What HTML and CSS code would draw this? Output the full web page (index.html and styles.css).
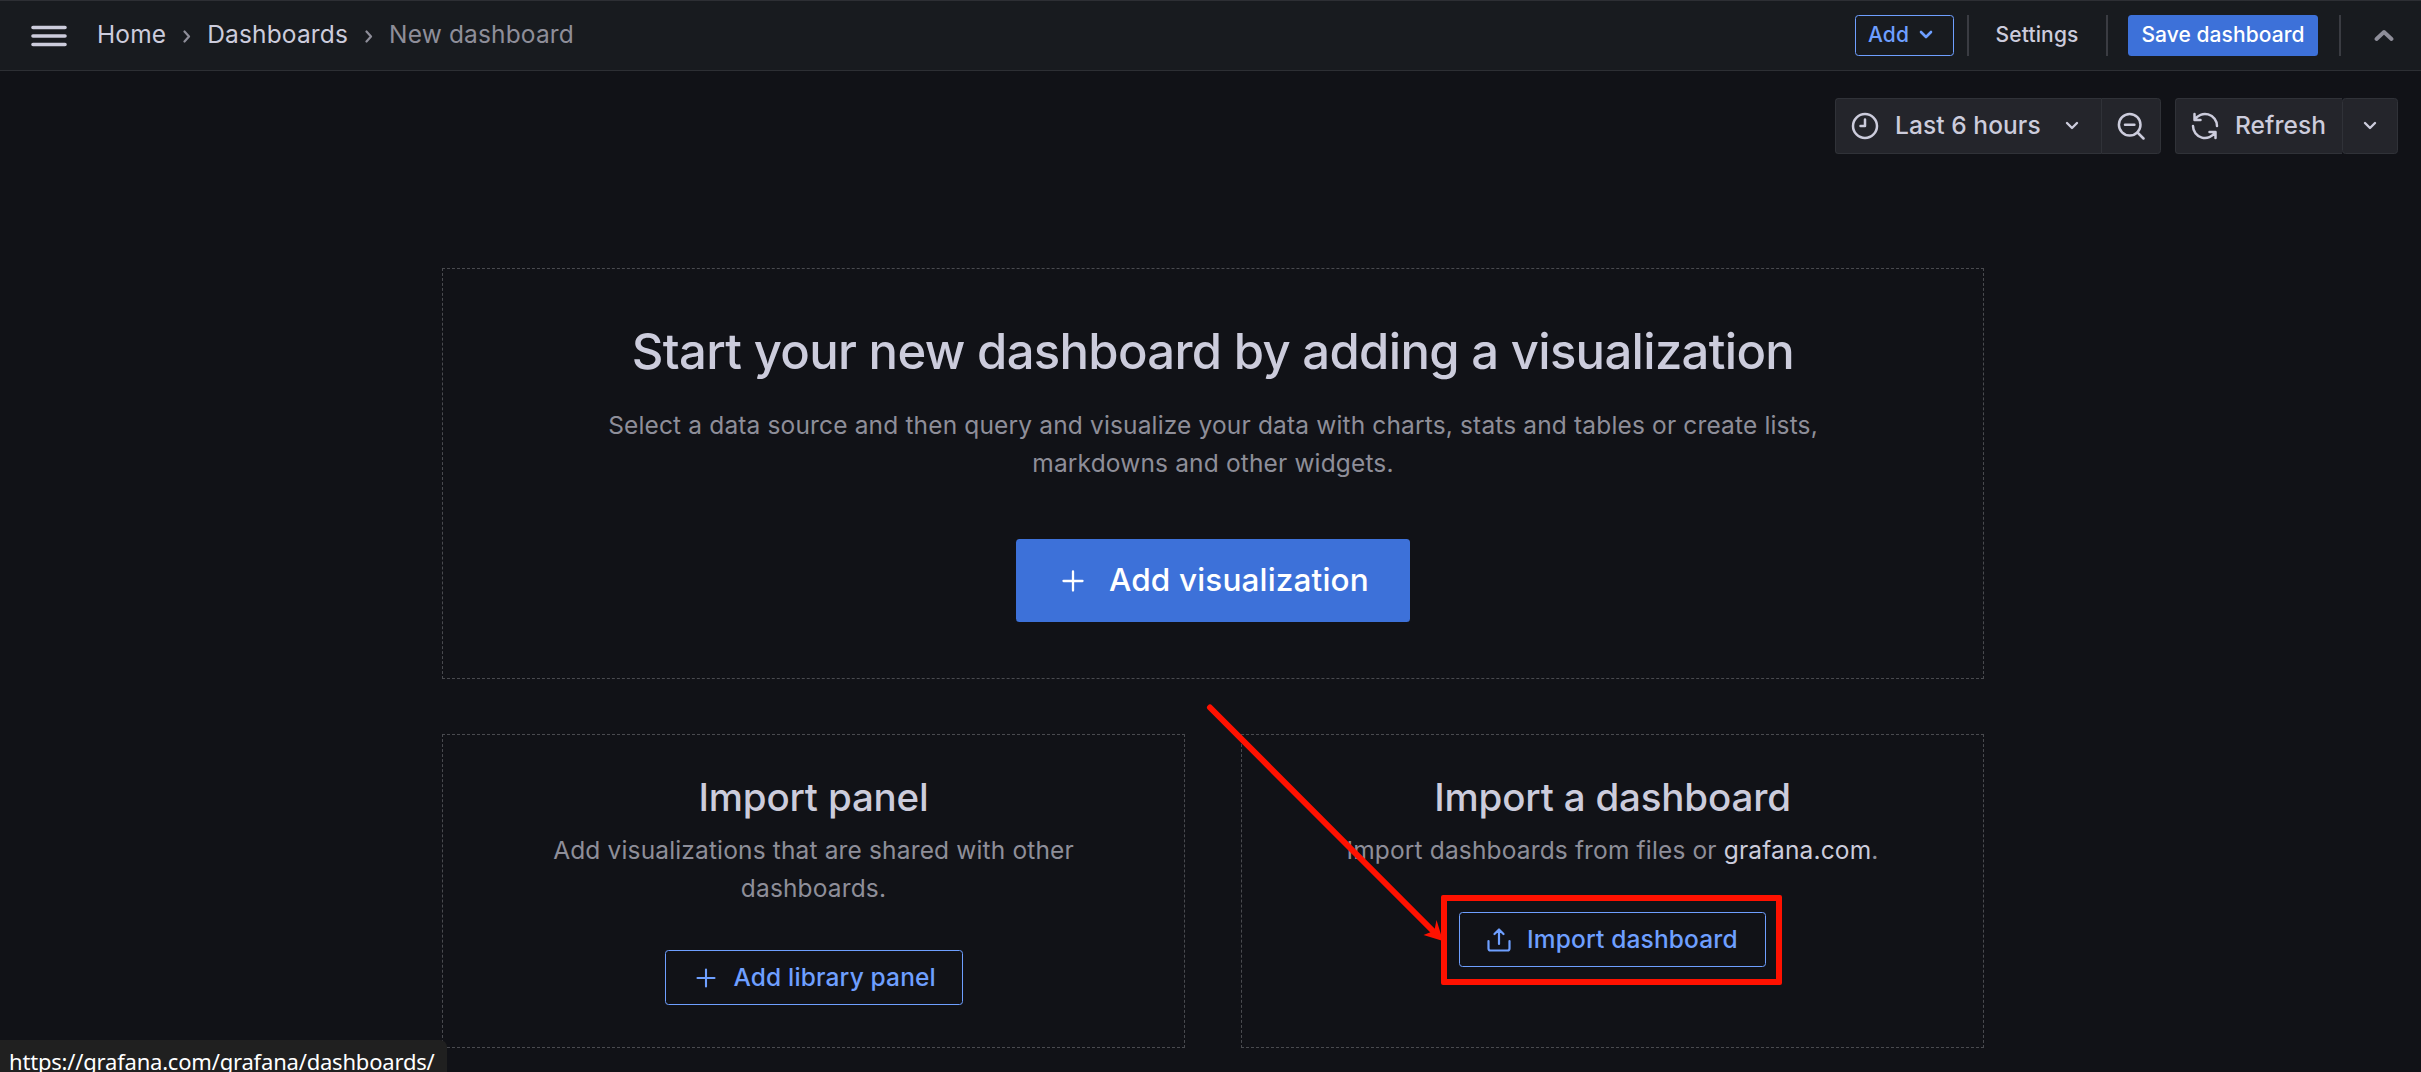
FILE: index.html
```html
<!DOCTYPE html>
<html lang="en">
<head>
<meta charset="utf-8">
<title>New dashboard - Dashboards - Grafana</title>
<link rel="stylesheet" href="styles.css">
</head>
<body>
<header class="topbar">
  <button class="menu" aria-label="Menu">
    <svg width="36" height="24" viewBox="0 0 36 24"><path d="M2 3.5h32M2 12h32M2 20.500h32" stroke-width="3.6"/></svg>
  </button>
  <nav class="crumbs">
    <a class="crumb">Home</a>
    <svg class="sep" width="8" height="13" viewBox="0 0 8 13"><path d="M1.500 1.500l4.500 5-4.500 5" stroke-width="2.200"/></svg>
    <a class="crumb">Dashboards</a>
    <svg class="sep" width="8" height="13" viewBox="0 0 8 13"><path d="M1.500 1.500l4.500 5-4.500 5" stroke-width="2.200"/></svg>
    <span class="crumb current">New dashboard</span>
  </nav>
  <div class="actions">
    <button class="btn small outline add">Add
      <svg width="14" height="10" viewBox="0 0 14 10"><path d="M2 2l5 5 5-5" stroke-width="2.600"/></svg>
    </button>
    <i class="divider d1"></i>
    <button class="btn small text">Settings</button>
    <i class="divider d2"></i>
    <button class="btn small primary save">Save dashboard</button>
    <i class="divider d3"></i>
    <button class="collapse" aria-label="Collapse">
      <svg width="20" height="13" viewBox="0 0 20 13"><path d="M2.500 10L10 3l7.500 7" stroke-width="3.800"/></svg>
    </button>
  </div>
</header>

<div class="toolbar">
  <div class="group">
    <button class="tool range">
      <svg width="28" height="28" viewBox="0 0 28 28"><circle cx="14" cy="14" r="12" stroke-width="2.500"/><path d="M14 7.500V14H9.500" stroke-width="2.500"/></svg>
      <span>Last 6 hours</span>
      <svg class="chev" width="14" height="10" viewBox="0 0 14 10"><path d="M2 2l5 5 5-5" stroke-width="2.400"/></svg>
    </button>
    <button class="tool zoomout" aria-label="Zoom out">
      <svg width="28" height="28" viewBox="0 0 28 28"><circle cx="12.700" cy="12.700" r="10.800" stroke-width="2.500"/><path d="M8 12.700h9.400M20.500 20.500l6 6" stroke-width="2.500"/></svg>
    </button>
  </div>
  <div class="group">
    <button class="tool refresh">
      <svg width="28" height="28" viewBox="0 0 28 28"><path d="M3.500 2v6h6M3.700 7.800A12 12 0 0 1 26 14M24.500 26v-6h-6M24.300 20.200A12 12 0 0 1 2 14" stroke-width="2.500"/></svg>
      <span>Refresh</span>
    </button>
    <button class="tool interval" aria-label="Refresh interval">
      <svg class="chev" width="14" height="10" viewBox="0 0 14 10"><path d="M2 2l5 5 5-5" stroke-width="2.400"/></svg>
    </button>
  </div>
</div>

<main class="empty">
  <section class="card hero">
    <h1>Start your new dashboard by adding a visualization</h1>
    <p>Select a data source and then query and visualize your data with charts, stats and tables or create lists, markdowns and other widgets.</p>
    <button class="btn large primary">
      <svg width="22" height="22" viewBox="0 0 22 22"><path d="M11 1.500v19M1.500 11h19" stroke-width="2.300"/></svg>
      <span>Add visualization</span>
    </button>
  </section>
  <section class="card">
    <h3>Import panel</h3>
    <p>Add visualizations that are shared with other dashboards.</p>
    <button class="btn medium outline library">
      <svg width="20" height="20" viewBox="0 0 20 20"><path d="M10 1.500v17M1.500 10h17" stroke-width="2.100"/></svg>
      <span>Add library panel</span>
    </button>
  </section>
  <section class="card">
    <h3>Import a dashboard</h3>
    <p>Import dashboards from files or <a>grafana.com</a>.</p>
    <button class="btn medium outline import">
      <svg width="24" height="24" viewBox="0 0 24 24"><path d="M12 16V2M7.500 6L12 1.500 16.500 6M1.500 13v7.500a2 2 0 0 0 2 2h17a2 2 0 0 0 2-2V13" stroke-width="2.200"/></svg>
      <span>Import dashboard</span>
    </button>
  </section>
</main>

<div class="highlight"></div>
<svg class="arrow" width="250" height="250" viewBox="0 0 250 250"><path class="shaft" d="M10 7.500L234 232"/><path class="head" d="M243 241l-6.500-21-2 10-1 1-10 4z"/></svg>
<div class="status">https://grafana.com/grafana/dashboards/</div>
</body>
</html>
```
FILE: styles.css
```css
* { box-sizing: border-box; }
html, body { height: 100%; }
body {
  margin: 0;
  overflow: hidden;
  background: #111217;
  color: #ccccdc;
  font: 400 24.5px/38px Inter, "Liberation Sans", sans-serif;
  letter-spacing: 0.15px;
}
svg { display: block; flex: none; fill: none; stroke: currentColor; stroke-linecap: round; stroke-linejoin: round; }
button { margin: 0; padding: 0; border: 0; background: none; color: inherit; font: inherit; letter-spacing: inherit; }
h1, h3, p { margin: 0; }

.topbar {
  display: flex;
  align-items: center;
  height: 71px;
  padding: 0 27px 0 31px;
  background: #181b1f;
  border-top: 1px solid #2d2f34;
  border-bottom: 1px solid #2d2f34;
}
.menu { margin-right: 30px; }
.crumbs { display: flex; align-items: center; }
.crumb { line-height: 36px; padding-bottom: 3px; }
.sep { margin: 2px 16px 0 17px; color: #8e8e99; }
.current { color: #8e8e99; }
.actions { display: flex; align-items: center; margin-left: auto; }

.btn {
  display: inline-flex;
  align-items: center;
  justify-content: center;
  border-radius: 3.5px;
  font-weight: 500;
  white-space: nowrap;
}
.btn span { padding-bottom: 2px; }
.small { height: 41px; padding-bottom: 2px; font-size: 21px; line-height: 38px; }
.medium { height: 55px; justify-content: flex-start; }
.large { height: 83px; width: 394px; padding-left: 46px; justify-content: flex-start; font-size: 31.5px; gap: 25px; }
.outline { border: 1px solid #6e9fff; color: #6e9fff; }
.primary { background: #3d71d9; color: #fff; }
.text { width: 82px; color: #ccccdc; }
.library { width: 298px; padding-left: 30px; gap: 18px; }
.import { width: 307px; padding-left: 27px; gap: 16px; }
.add { width: 99px; gap: 10px; padding-right: 8px; }
.save { width: 190px; letter-spacing: 0.08px; }
.divider { width: 2px; height: 41px; background: #3a3c42; }
.d1 { margin: 0 27px 0 13px; }
.d2 { margin: 0 20px 0 28px; }
.d3 { margin: 0 33px 0 21px; }
.collapse { color: #8e8e99; }

.toolbar { display: flex; justify-content: flex-end; gap: 14px; padding: 27px 23px 0 0; }
.group { display: flex; }
.tool {
  display: flex;
  align-items: center;
  height: 56px;
  background: #24252b;
  border: 1px solid #303238;
  font-weight: 500;
  letter-spacing: 0.08px;
}
.tool span { padding-bottom: 2px; }
.tool svg { margin-bottom: 1px; }
.range { width: 266px; padding-left: 15px; gap: 16px; border-right: 0; border-radius: 3.5px 0 0 3.5px; }
.range .chev { margin-left: 8px; }
.zoomout { width: 60px; padding-right: 1px; justify-content: center; border-radius: 0 3.5px 3.5px 0; }
.refresh { width: 167px; padding-left: 15px; gap: 16px; border-right: 0; border-radius: 3.5px 0 0 3.5px; }
.interval { width: 56px; justify-content: center; border-radius: 3.5px; }

.empty {
  display: grid;
  grid-template-columns: 1fr 1fr;
  grid-template-rows: 411px 314px;
  gap: 55px 56px;
  width: 1542px;
  margin: 114px 0 0 442px;
}
.card {
  display: flex;
  flex-direction: column;
  align-items: center;
  padding: 41px 55px 0;
  border: 1px dashed #494a4f;
  text-align: center;
}
.card p { color: #8e8e99; }
.card a { color: #ccccdc; }
.hero { grid-column: 1 / 3; padding: 49px 140px 0; }
h1 { font-size: 49px; line-height: 68px; font-weight: 500; letter-spacing: -0.68px; margin-bottom: 20px; }
.hero p { margin-bottom: 57px; }
h3 { font-size: 38.5px; line-height: 42px; font-weight: 500; letter-spacing: -0.17px; margin-bottom: 13px; }
.card:not(.hero) p { margin-bottom: 43px; }

.highlight { position: absolute; left: 1441px; top: 895px; width: 341px; height: 90px; border: 6px solid #ff1100; border-radius: 2px; }
.arrow { position: absolute; left: 1200px; top: 700px; }
.shaft { stroke: #ff1100; stroke-width: 6; }
.head { fill: #ff1100; stroke: none; }
.status {
  position: absolute;
  left: 0;
  top: 1040px;
  width: 447px;
  height: 32px;
  padding-left: 9px;
  overflow: hidden;
  background: #202020;
  border-radius: 0 7px 0 0;
  color: #fff;
  font: 22px/43px "Noto Sans", "Open Sans", sans-serif;
  letter-spacing: -0.2px;
  white-space: nowrap;
}
```
